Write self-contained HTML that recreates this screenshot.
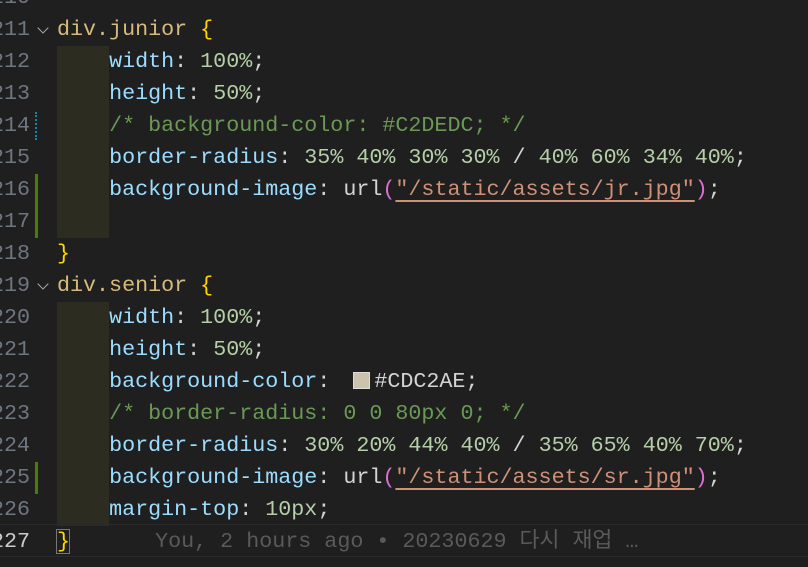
<!DOCTYPE html><html><head><style>
body{margin:0;width:808px;height:565px;background:#1f1f1f;overflow:hidden;font-family:"Liberation Mono","Noto Sans CJK KR",monospace;font-size:21.7px;position:relative}
#w{position:absolute;left:0;top:2px;width:808px;height:565px}
.l{position:absolute;left:57px;height:32px;line-height:32px;white-space:pre;color:#d4d4d4}
.n{position:absolute;right:778px;height:32px;line-height:32px;color:#6e7681;text-align:right;white-space:pre}
.ig{position:absolute;left:57px;width:52px;height:32px;background:#2c2c20}
.s{color:#d7ba7d}.b{color:#ffd700}.p{color:#9cdcfe}.v{color:#b5cea8}.c{color:#6a9955}.st{color:#ce9178;text-decoration:underline;text-underline-offset:5px}.pa{color:#da70d6}
.ar{position:absolute;left:39px;width:7px;height:7px;border-right:1.5px solid #aaa;border-bottom:1.5px solid #aaa;transform:rotate(45deg)}
</style></head><body><div id="w">
<div class="n" style="top:-20px">210</div>
<div class="n" style="top:12px">211</div><div class="ar" style="top:22px"></div>
<div class="l" style="top:12px"><span class="s">div.junior</span> <span class="b">{</span></div>
<div class="ig" style="top:44px;height:160px"></div>
<div class="ig" style="top:204px"></div>
<div class="n" style="top:44px">212</div><div class="l" style="top:44px">    <span class="p">width</span>: <span class="v">100%</span>;</div>
<div class="n" style="top:76px">213</div><div class="l" style="top:76px">    <span class="p">height</span>: <span class="v">50%</span>;</div>
<div class="n" style="top:108px">214</div><div style="position:absolute;left:35px;top:110px;width:2px;height:28px;border-left:2px dotted #1b81a8"></div><div class="l" style="top:108px">    <span class="c">/* background-color: #C2DEDC; */</span></div>
<div class="n" style="top:140px">215</div><div class="l" style="top:140px">    <span class="p">border-radius</span>: <span class="v">35% 40% 30% 30%</span> / <span class="v">40% 60% 34% 40%</span>;</div>
<div class="n" style="top:172px">216</div><div style="position:absolute;left:35px;top:172px;width:3px;height:64px;background:#487e02"></div><div class="l" style="top:172px">    <span class="p">background-image</span>: url<span class="pa">(</span><span class="st">"/static/assets/jr.jpg"</span><span class="pa">)</span>;</div>
<div class="n" style="top:204px">217</div>
<div class="n" style="top:236px">218</div><div class="l" style="top:236px"><span class="b">}</span></div>
<div class="n" style="top:268px">219</div><div class="ar" style="top:278px"></div>
<div class="l" style="top:268px"><span class="s">div.senior</span> <span class="b">{</span></div>
<div class="ig" style="top:300px;height:224px"></div>
<div class="n" style="top:300px">220</div><div class="l" style="top:300px">    <span class="p">width</span>: <span class="v">100%</span>;</div>
<div class="n" style="top:332px">221</div><div class="l" style="top:332px">    <span class="p">height</span>: <span class="v">50%</span>;</div>
<div class="n" style="top:364px">222</div><div style="position:absolute;left:353px;top:370px;width:15px;height:15px;background:#CDC2AE;border:1px solid #ddd"></div><div class="l" style="top:364px">    <span class="p">background-color</span>: <span style="display:inline-block;width:31px"></span>#CDC2AE;</div>
<div class="n" style="top:396px">223</div><div class="l" style="top:396px">    <span class="c">/* border-radius: 0 0 80px 0; */</span></div>
<div class="n" style="top:428px">224</div><div class="l" style="top:428px">    <span class="p">border-radius</span>: <span class="v">30% 20% 44% 40%</span> / <span class="v">35% 65% 40% 70%</span>;</div>
<div class="n" style="top:460px">225</div><div style="position:absolute;left:35px;top:460px;width:3px;height:32px;background:#487e02"></div><div class="l" style="top:460px">    <span class="p">background-image</span>: url<span class="pa">(</span><span class="st">"/static/assets/sr.jpg"</span><span class="pa">)</span>;</div>
<div class="n" style="top:492px">226</div><div class="l" style="top:492px">    <span class="p">margin-top</span>: <span class="v">10px</span>;</div>
<div style="position:absolute;left:0;top:522px;width:808px;height:31px;border-top:1px solid #2a2a2a;border-bottom:1px solid #2a2a2a"></div>
<div style="position:absolute;left:36px;top:523px;width:7px;height:30px;background:#1f1f1f"></div>
<div class="n" style="top:524px;color:#cccccc">227</div>
<div style="position:absolute;left:56px;top:527px;width:12px;height:23px;border:1px solid #777"></div>
<div class="l" style="top:524px"><span class="b">}</span>      <span style="display:inline-block;width:7px"></span><span style="color:#5a5a5a">You, 2 hours ago • 20230629 다시 재업 …</span></div>
</div></body></html>
